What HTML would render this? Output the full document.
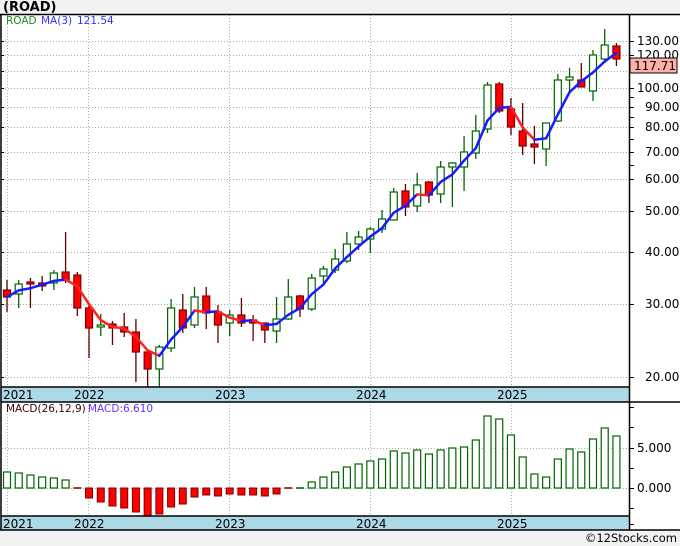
<!DOCTYPE html>
<html><head><meta charset="utf-8"><style>
html,body{margin:0;padding:0;background:#f2f2f2;width:680px;height:546px;overflow:hidden}
svg{display:block}
text{font-family:"DejaVu Sans","Liberation Sans",sans-serif}
</style></head><body>
<svg id="s" width="680" height="546" xmlns="http://www.w3.org/2000/svg">
<rect x="0" y="0" width="680" height="546" fill="#f2f2f2"/>
<rect x="1" y="14" width="679" height="516" fill="#fff"/>
<text x="3" y="11" font-size="13" font-weight="bold" fill="#000">(ROAD)</text>
<g id="grid" stroke="#aaa" stroke-width="1" stroke-dasharray="1,2"></g>
<g id="mac"></g>
<g id="cand"></g>
<g id="ma"></g>
<rect x="1" y="387" width="628" height="15" fill="#add8e6"/>
<rect x="1" y="516" width="628" height="14" fill="#add8e6"/>
<g font-size="12" fill="#000">
<text x="3" y="399">2021</text><text x="74" y="399">2022</text><text x="215" y="399">2023</text><text x="356" y="399">2024</text><text x="497" y="399">2025</text>
<text x="3" y="528">2021</text><text x="74" y="528">2022</text><text x="215" y="528">2023</text><text x="356" y="528">2024</text><text x="497" y="528">2025</text>
</g>
<g stroke="#000" stroke-width="1.5" fill="none">
<line x1="0" y1="14.5" x2="680" y2="14.5"/>
<line x1="1" y1="14" x2="1" y2="530"/>
<line x1="629.5" y1="14" x2="629.5" y2="530"/>
<line x1="1" y1="387" x2="629" y2="387"/>
<line x1="1" y1="402" x2="680" y2="402"/>
<line x1="1" y1="516" x2="629" y2="516"/>
<line x1="0" y1="530" x2="680" y2="530"/>
</g>
<g id="ticks" stroke="#000" stroke-width="1"></g>
<g font-size="12" fill="#000">
<text x="637" y="45">130.00</text><text x="637" y="59">120.00</text>
<text x="637" y="92">100.00</text><text x="645" y="111">90.00</text><text x="645" y="131">80.00</text>
<text x="645" y="156">70.00</text><text x="645" y="183">60.00</text><text x="645" y="215">50.00</text>
<text x="645" y="256">40.00</text><text x="645" y="308">30.00</text><text x="645" y="381">20.00</text>
<text x="637" y="452">5.000</text><text x="637" y="492">0.000</text>
</g>
<rect x="630" y="58" width="47" height="15" fill="#ffb0a8" stroke="#000" stroke-width="1"/>
<text x="634" y="70" font-size="12" fill="#000">117.71</text>
<g font-size="10.5">
<text x="6" y="24" fill="#228b22">ROAD</text><text x="41" y="24" fill="#3333ff">MA(3)</text><text x="77" y="24" fill="#3333ff">121.54</text>
<text x="6" y="412" fill="#400000">MACD(26,12,9)</text><text x="88" y="412" fill="#6633ff">MACD:6.610</text>
</g>
<text x="677" y="542" font-size="11.5" fill="#000" text-anchor="end">©12Stocks.com</text>
</svg>
<script>
var NS="http://www.w3.org/2000/svg";
function el(p,t,a){var e=document.createElementNS(NS,t);for(var k in a)e.setAttribute(k,a[k]);document.getElementById(p).appendChild(e);return e;}
[41,55,71,88,107,127,152,179,211,252,304,377].forEach(function(y){el("grid","line",{x1:2,y1:y+.5,x2:629,y2:y+.5});});
[448,488].forEach(function(y){el("grid","line",{x1:2,y1:y+.5,x2:629,y2:y+.5});});
[7,88,229,370,511].forEach(function(x){el("grid","line",{x1:x+.5,y1:15,x2:x+.5,y2:387});el("grid","line",{x1:x+.5,y1:402,x2:x+.5,y2:516});});
[41,55,71,88,97,107,117,127,139,152,165,179,211,252,304,377].forEach(function(y){el("ticks","line",{x1:630,y1:y+.5,x2:634,y2:y+.5});});
[41,55,71,88,107,127,152,179,211,252,304,377].forEach(function(y){el("ticks","line",{x1:1,y1:y+.5,x2:4,y2:y+.5});});
[407,427,448,468,488,508,524].forEach(function(y){el("ticks","line",{x1:630,y1:y+.5,x2:634,y2:y+.5});});
var C=[[1,290,297,280,312],[0,284,294,280,308],[1,282,284,278,308],[1,283,286,276,291],[0,273,283,270,290],[1,272,280,232,283],[1,275,308,272,316],[1,308,328,305,358],[0,325,327,314,336],[1,324,328,321,345],[1,327,332,313,337],[1,332,352,319,382],[1,352,369,352,388],[0,347,369,345,387],[0,308,348,299,352],[1,310,328,294,333],[0,297,325,287,328],[1,296,313,287,329],[1,312,325,305,343],[0,315,323,310,336],[1,315,323,298,327],[1,320,323,315,341],[1,323,330,323,343],[0,319,331,297,343],[0,297,319,279,320],[1,296,309,295,317],[0,278,309,274,311],[0,269,276,266,283],[0,259,270,249,273],[0,244,261,232,263],[0,237,244,231,250],[0,229,239,227,253],[0,219,229,210,233],[0,192,220,188,220],[1,191,207,184,216],[0,185,206,173,212],[1,182,195,181,203],[0,167,194,161,203],[0,163,167,162,207],[0,152,167,136,191],[0,131,153,115,159],[0,85,129,82,133],[1,84,111,82,113],[1,109,127,98,135],[1,131,146,103,155],[1,144,147,126,164],[0,123,149,123,166],[0,80,121,74,122],[0,77,80,68,92],[1,80,87,63,87],[0,55,91,50,101],[0,45,59,29,63],[1,46,59,43,66]];
var closes=[];
C.forEach(function(c,i){var x=7+i*11.72;var red=c[0];
 var wc=red?"#5a0000":"#006400";
 el("cand","line",{x1:x,y1:c[3],x2:x,y2:c[4],stroke:wc,"stroke-width":1.3});
 el("cand","rect",{x:x-3.5,y:c[1],width:7,height:Math.max(1,c[2]-c[1]),fill:red?"#ff0000":"#fff",stroke:red?"#800000":"#006400","stroke-width":1.2});
 closes.push(red?c[2]:c[1]);});
function p(y){return Math.exp((914.8-y)/179.5);}function yy(v){return 914.8-179.5*Math.log(v);}
var ma=[];closes.forEach(function(y,i){var s=0,n=0;for(var j=Math.max(0,i-2);j<=i;j++){s+=p(closes[j]);n++;}ma.push(yy(s/n));});
for(var i=1;i<ma.length;i++){el("ma","line",{x1:7+(i-1)*11.72,y1:ma[i-1],x2:7+i*11.72,y2:ma[i],stroke:ma[i]>ma[i-1]+0.3?"#ff2020":"#1a1aff","stroke-width":2.5,"stroke-linecap":"round"});}
var M=[472,473,475,477,478,480,488,498,502,506,508,512,516,514,507,504,497,495,496,494,495,495,496,494,489,488,482,477,472,467,464,461,459,451,453,450,454,450,448,447,440,416,419,435,457,474,477,459,449,452,439,428,436];
M.forEach(function(t,i){var x=7+i*11.72;
 if(Math.abs(t-488)<2){el("mac","line",{x1:x-4,y1:488,x2:x+4,y2:488,stroke:i<25?"#800000":"#006400","stroke-width":1.5});return;}
 if(t<488) el("mac","rect",{x:x-3.5,y:t,width:7,height:488-t,fill:"#fff",stroke:"#006400","stroke-width":1.2});
 else el("mac","rect",{x:x-3.5,y:488,width:7,height:t-488,fill:"#ff0000",stroke:"#800000","stroke-width":1});
});
</script>
</body></html>
